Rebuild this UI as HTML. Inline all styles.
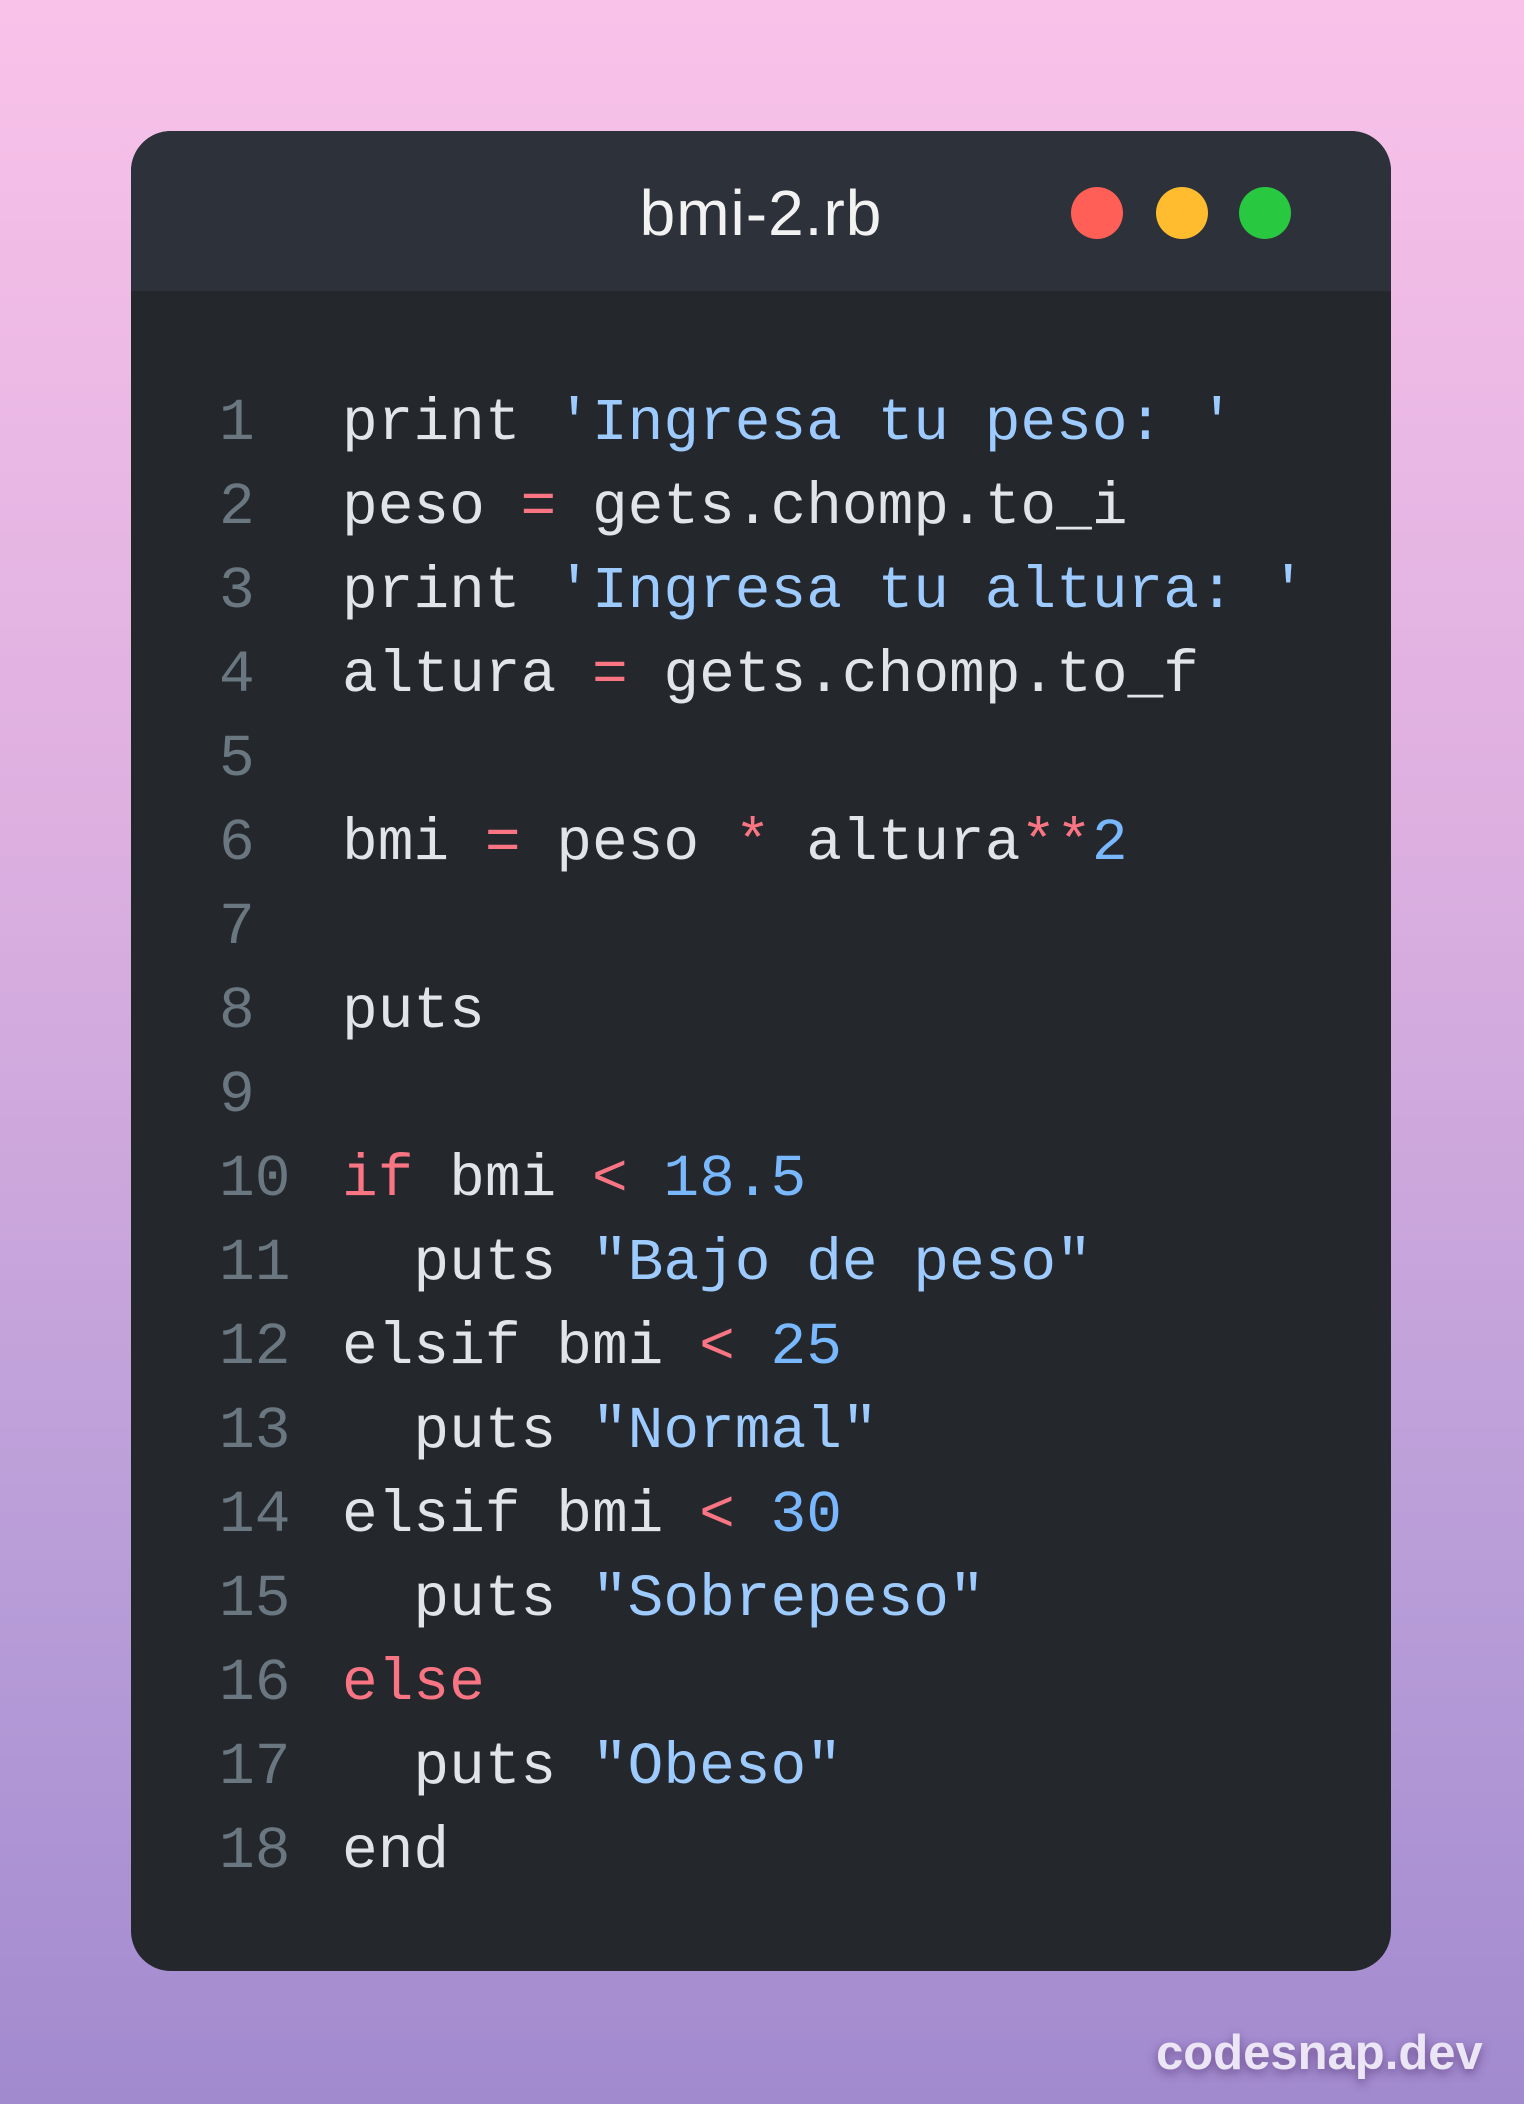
<!DOCTYPE html>
<html><head><meta charset="utf-8"><style>
html,body{margin:0;padding:0}
body{width:1524px;height:2104px;position:relative;overflow:hidden;background:linear-gradient(180deg,#f9c2e9 0%,#dcafe0 40%,#b89dd8 75%,#a28acf 100%);}
.card{position:absolute;left:131px;top:131px;width:1260px;height:1840px;border-radius:40px;overflow:hidden;background:#24282c;}
.hdr{position:absolute;left:0;top:0;width:100%;height:160px;background:#2d3139;}
.title{position:absolute;left:0;width:1260px;top:82px;line-height:0;text-align:center;font-family:"Liberation Sans",sans-serif;font-size:64px;letter-spacing:1px;color:#f2f2f2;}
.dot{position:absolute;width:52px;height:52px;border-radius:50%;top:56px}
.ln{position:absolute;left:88px;font-family:"Liberation Mono",monospace;font-size:59.5px;color:#6a7781;white-space:pre;line-height:0}
.cd{position:absolute;left:211px;font-family:"Liberation Mono",monospace;font-size:59.5px;color:#e1e4e8;white-space:pre;line-height:0}
.s{color:#9ecbff}.k{color:#f97583}.n{color:#79b8ff}
.wm{position:absolute;left:1156px;top:2053px;line-height:0;font-family:"Liberation Sans",sans-serif;font-weight:bold;font-size:49px;color:#ebe5f6;text-shadow:0 4px 10px rgba(60,30,90,.55)}
</style></head><body>
<div class="card">
<div class="hdr"></div>
<div class="title">bmi-2.rb</div>
<div class="dot" style="left:940px;background:#ff5f57"></div>
<div class="dot" style="left:1025px;background:#febc2e"></div>
<div class="dot" style="left:1108px;background:#28c840"></div>
<div class="ln" style="top:292px">1</div><div class="cd" style="top:292px">print <span class="s">'Ingresa tu peso: '</span></div>
<div class="ln" style="top:376px">2</div><div class="cd" style="top:376px">peso <span class="k">=</span> gets.chomp.to_i</div>
<div class="ln" style="top:460px">3</div><div class="cd" style="top:460px">print <span class="s">'Ingresa tu altura: '</span></div>
<div class="ln" style="top:544px">4</div><div class="cd" style="top:544px">altura <span class="k">=</span> gets.chomp.to_f</div>
<div class="ln" style="top:628px">5</div>
<div class="ln" style="top:712px">6</div><div class="cd" style="top:712px">bmi <span class="k">=</span> peso <span class="k">*</span> altura<span class="k">**</span><span class="n">2</span></div>
<div class="ln" style="top:796px">7</div>
<div class="ln" style="top:880px">8</div><div class="cd" style="top:880px">puts</div>
<div class="ln" style="top:964px">9</div>
<div class="ln" style="top:1048px">10</div><div class="cd" style="top:1048px"><span class="k">if</span> bmi <span class="k">&lt;</span> <span class="n">18.5</span></div>
<div class="ln" style="top:1132px">11</div><div class="cd" style="top:1132px">  puts <span class="s">"Bajo de peso"</span></div>
<div class="ln" style="top:1216px">12</div><div class="cd" style="top:1216px">elsif bmi <span class="k">&lt;</span> <span class="n">25</span></div>
<div class="ln" style="top:1300px">13</div><div class="cd" style="top:1300px">  puts <span class="s">"Normal"</span></div>
<div class="ln" style="top:1384px">14</div><div class="cd" style="top:1384px">elsif bmi <span class="k">&lt;</span> <span class="n">30</span></div>
<div class="ln" style="top:1468px">15</div><div class="cd" style="top:1468px">  puts <span class="s">"Sobrepeso"</span></div>
<div class="ln" style="top:1552px">16</div><div class="cd" style="top:1552px"><span class="k">else</span></div>
<div class="ln" style="top:1636px">17</div><div class="cd" style="top:1636px">  puts <span class="s">"Obeso"</span></div>
<div class="ln" style="top:1720px">18</div><div class="cd" style="top:1720px">end</div>
</div>
<div class="wm">codesnap.dev</div>
</body></html>
